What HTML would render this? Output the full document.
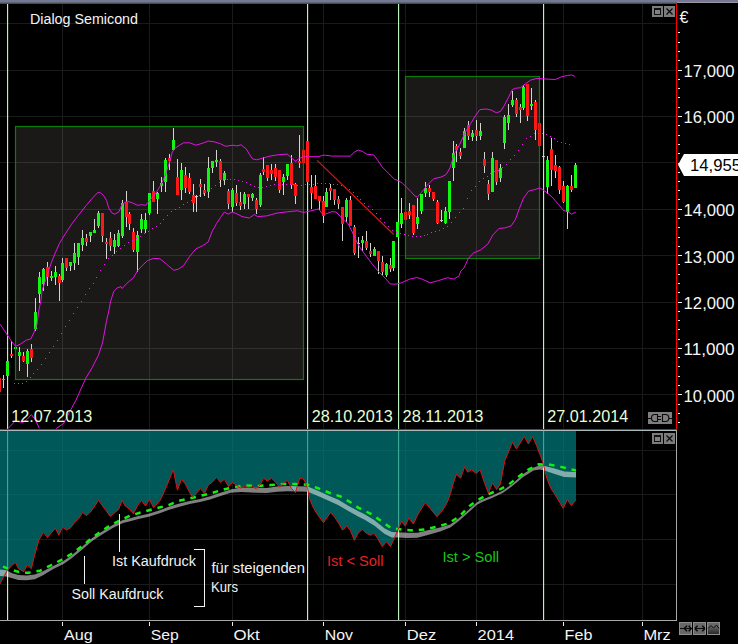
<!DOCTYPE html><html><head><meta charset="utf-8"><title>Dialog Semicond</title>
<style>html,body{margin:0;padding:0;background:#000;overflow:hidden}svg{display:block}text{font-family:"Liberation Sans",sans-serif}</style></head><body>
<svg width="738" height="644" viewBox="0 0 738 644">
<rect width="738" height="644" fill="#000"/>
<g shape-rendering="crispEdges">
<rect x="0" y="0" width="738" height="2" fill="#77779a"/>
<rect x="0" y="2" width="677" height="1" fill="#5a6a6c"/>
<rect x="677" y="2" width="61" height="1" fill="#9a9a9a"/>
<rect x="62" y="4" width="1" height="425" fill="#1a1a1a"/>
<rect x="62" y="431" width="1" height="189" fill="#1a1a1a"/>
<rect x="149" y="4" width="1" height="425" fill="#1a1a1a"/>
<rect x="149" y="431" width="1" height="189" fill="#1a1a1a"/>
<rect x="232" y="4" width="1" height="425" fill="#1a1a1a"/>
<rect x="232" y="431" width="1" height="189" fill="#1a1a1a"/>
<rect x="323" y="4" width="1" height="425" fill="#1a1a1a"/>
<rect x="323" y="431" width="1" height="189" fill="#1a1a1a"/>
<rect x="405" y="4" width="1" height="425" fill="#1a1a1a"/>
<rect x="405" y="431" width="1" height="189" fill="#1a1a1a"/>
<rect x="476" y="4" width="1" height="425" fill="#1a1a1a"/>
<rect x="476" y="431" width="1" height="189" fill="#1a1a1a"/>
<rect x="563" y="4" width="1" height="425" fill="#1a1a1a"/>
<rect x="563" y="431" width="1" height="189" fill="#1a1a1a"/>
<rect x="642" y="4" width="1" height="425" fill="#1a1a1a"/>
<rect x="642" y="431" width="1" height="189" fill="#1a1a1a"/>
<rect x="0" y="23" width="676" height="1" fill="#1a1a1a"/>
<rect x="0" y="70" width="676" height="1" fill="#1a1a1a"/>
<rect x="0" y="116" width="676" height="1" fill="#1a1a1a"/>
<rect x="0" y="162" width="676" height="1" fill="#1a1a1a"/>
<rect x="0" y="209" width="676" height="1" fill="#1a1a1a"/>
<rect x="0" y="255" width="676" height="1" fill="#1a1a1a"/>
<rect x="0" y="302" width="676" height="1" fill="#1a1a1a"/>
<rect x="0" y="348" width="676" height="1" fill="#1a1a1a"/>
<rect x="0" y="394" width="676" height="1" fill="#1a1a1a"/>
<rect x="0" y="450" width="676" height="1" fill="#1a1a1a"/>
<rect x="0" y="494" width="676" height="1" fill="#1a1a1a"/>
<rect x="0" y="539" width="676" height="1" fill="#1a1a1a"/>
<rect x="0" y="584" width="676" height="1" fill="#1a1a1a"/>
</g>
<rect x="15.5" y="126.5" width="288" height="253" fill="rgba(255,236,214,0.105)"/>
<rect x="405.5" y="76.5" width="134" height="182" fill="rgba(255,236,214,0.105)"/>
<rect x="7" y="4" width="1.15" height="425" fill="#bdf2bd"/>
<rect x="307" y="4" width="1.15" height="425" fill="#bdf2bd"/>
<rect x="398" y="4" width="1.15" height="425" fill="#bdf2bd"/>
<rect x="543" y="4" width="1.15" height="425" fill="#bdf2bd"/>
<g shape-rendering="crispEdges">
<rect x="-2" y="378" width="3" height="14" fill="#ff1818"/>
<rect x="3" y="375" width="1" height="13" fill="#d6d4ce"/>
<rect x="2" y="379" width="3" height="1" fill="#12f612"/>
<rect x="6" y="361" width="3" height="15" fill="#12f612"/>
<rect x="11" y="341" width="1" height="17" fill="#d6d4ce"/>
<rect x="10" y="354" width="3" height="2" fill="#ff1818"/>
<rect x="15" y="343" width="1" height="7" fill="#d6d4ce"/>
<rect x="14" y="347" width="3" height="2" fill="#12f612"/>
<rect x="19" y="347" width="1" height="24" fill="#d6d4ce"/>
<rect x="18" y="352" width="3" height="4" fill="#12f612"/>
<rect x="23" y="352" width="1" height="10" fill="#d6d4ce"/>
<rect x="22" y="356" width="3" height="5" fill="#ff1818"/>
<rect x="27" y="349" width="1" height="28" fill="#d6d4ce"/>
<rect x="26" y="351" width="3" height="13" fill="#12f612"/>
<rect x="31" y="344" width="1" height="18" fill="#d6d4ce"/>
<rect x="30" y="349" width="3" height="9" fill="#ff1818"/>
<rect x="35" y="298" width="1" height="33" fill="#d6d4ce"/>
<rect x="34" y="312" width="3" height="17" fill="#12f612"/>
<rect x="39" y="272" width="1" height="31" fill="#d6d4ce"/>
<rect x="38" y="277" width="3" height="17" fill="#12f612"/>
<rect x="43" y="268" width="1" height="23" fill="#d6d4ce"/>
<rect x="42" y="269" width="3" height="15" fill="#12f612"/>
<rect x="47" y="262" width="1" height="24" fill="#d6d4ce"/>
<rect x="46" y="267" width="3" height="10" fill="#ff1818"/>
<rect x="51" y="271" width="1" height="10" fill="#d6d4ce"/>
<rect x="50" y="276" width="3" height="2" fill="#12f612"/>
<rect x="55" y="266" width="1" height="19" fill="#d6d4ce"/>
<rect x="54" y="272" width="3" height="5" fill="#12f612"/>
<rect x="59" y="274" width="1" height="27" fill="#d6d4ce"/>
<rect x="58" y="276" width="3" height="7" fill="#ff1818"/>
<rect x="62" y="258" width="1" height="24" fill="#d6d4ce"/>
<rect x="61" y="263" width="3" height="17" fill="#12f612"/>
<rect x="66" y="258" width="1" height="13" fill="#d6d4ce"/>
<rect x="65" y="258" width="3" height="10" fill="#ff1818"/>
<rect x="70" y="262" width="1" height="9" fill="#d6d4ce"/>
<rect x="69" y="262" width="3" height="4" fill="#12f612"/>
<rect x="74" y="243" width="1" height="27" fill="#d6d4ce"/>
<rect x="73" y="253" width="3" height="10" fill="#12f612"/>
<rect x="78" y="243" width="1" height="22" fill="#d6d4ce"/>
<rect x="77" y="243" width="3" height="14" fill="#12f612"/>
<rect x="82" y="230" width="1" height="21" fill="#d6d4ce"/>
<rect x="81" y="238" width="3" height="7" fill="#12f612"/>
<rect x="86" y="234" width="1" height="12" fill="#d6d4ce"/>
<rect x="85" y="238" width="3" height="4" fill="#ff1818"/>
<rect x="90" y="232" width="1" height="10" fill="#d6d4ce"/>
<rect x="89" y="232" width="3" height="4" fill="#12f612"/>
<rect x="94" y="219" width="1" height="14" fill="#d6d4ce"/>
<rect x="93" y="230" width="3" height="3" fill="#12f612"/>
<rect x="98" y="211" width="1" height="17" fill="#d6d4ce"/>
<rect x="97" y="213" width="3" height="13" fill="#12f612"/>
<rect x="102" y="213" width="1" height="29" fill="#d6d4ce"/>
<rect x="101" y="213" width="3" height="23" fill="#ff1818"/>
<rect x="106" y="238" width="1" height="21" fill="#d6d4ce"/>
<rect x="105" y="242" width="3" height="2" fill="#ff1818"/>
<rect x="110" y="232" width="1" height="19" fill="#d6d4ce"/>
<rect x="109" y="238" width="3" height="8" fill="#ff1818"/>
<rect x="114" y="234" width="1" height="20" fill="#d6d4ce"/>
<rect x="113" y="240" width="3" height="7" fill="#12f612"/>
<rect x="118" y="230" width="1" height="17" fill="#d6d4ce"/>
<rect x="117" y="233" width="3" height="13" fill="#12f612"/>
<rect x="122" y="200" width="1" height="38" fill="#d6d4ce"/>
<rect x="121" y="203" width="3" height="33" fill="#12f612"/>
<rect x="126" y="191" width="1" height="36" fill="#d6d4ce"/>
<rect x="125" y="202" width="3" height="15" fill="#ff1818"/>
<rect x="129" y="212" width="1" height="18" fill="#d6d4ce"/>
<rect x="128" y="214" width="3" height="10" fill="#ff1818"/>
<rect x="133" y="228" width="1" height="24" fill="#d6d4ce"/>
<rect x="132" y="232" width="3" height="18" fill="#ff1818"/>
<rect x="137" y="231" width="1" height="41" fill="#d6d4ce"/>
<rect x="136" y="235" width="3" height="17" fill="#12f612"/>
<rect x="141" y="214" width="1" height="19" fill="#d6d4ce"/>
<rect x="140" y="219" width="3" height="10" fill="#12f612"/>
<rect x="145" y="213" width="1" height="20" fill="#d6d4ce"/>
<rect x="144" y="220" width="3" height="9" fill="#12f612"/>
<rect x="149" y="193" width="1" height="22" fill="#d6d4ce"/>
<rect x="148" y="193" width="3" height="20" fill="#12f612"/>
<rect x="153" y="181" width="1" height="21" fill="#d6d4ce"/>
<rect x="152" y="191" width="3" height="11" fill="#ff1818"/>
<rect x="157" y="192" width="1" height="22" fill="#d6d4ce"/>
<rect x="156" y="193" width="3" height="6" fill="#12f612"/>
<rect x="161" y="177" width="1" height="15" fill="#d6d4ce"/>
<rect x="160" y="183" width="3" height="3" fill="#12f612"/>
<rect x="165" y="158" width="1" height="34" fill="#d6d4ce"/>
<rect x="164" y="160" width="3" height="22" fill="#12f612"/>
<rect x="169" y="154" width="1" height="16" fill="#d6d4ce"/>
<rect x="168" y="158" width="3" height="3" fill="#ff1818"/>
<rect x="173" y="128" width="1" height="22" fill="#d6d4ce"/>
<rect x="172" y="140" width="3" height="10" fill="#12f612"/>
<rect x="177" y="159" width="1" height="36" fill="#d6d4ce"/>
<rect x="176" y="177" width="3" height="18" fill="#ff1818"/>
<rect x="181" y="163" width="1" height="37" fill="#d6d4ce"/>
<rect x="180" y="170" width="3" height="20" fill="#12f612"/>
<rect x="185" y="167" width="1" height="26" fill="#d6d4ce"/>
<rect x="184" y="175" width="3" height="13" fill="#ff1818"/>
<rect x="189" y="173" width="1" height="21" fill="#d6d4ce"/>
<rect x="188" y="178" width="3" height="14" fill="#ff1818"/>
<rect x="193" y="184" width="1" height="28" fill="#d6d4ce"/>
<rect x="192" y="195" width="3" height="8" fill="#ff1818"/>
<rect x="196" y="195" width="1" height="17" fill="#d6d4ce"/>
<rect x="195" y="196" width="3" height="1" fill="#c8c8c8"/>
<rect x="200" y="179" width="1" height="18" fill="#d6d4ce"/>
<rect x="199" y="184" width="3" height="3" fill="#ff1818"/>
<rect x="204" y="184" width="1" height="12" fill="#d6d4ce"/>
<rect x="203" y="190" width="3" height="3" fill="#ff1818"/>
<rect x="208" y="157" width="1" height="41" fill="#d6d4ce"/>
<rect x="207" y="168" width="3" height="24" fill="#12f612"/>
<rect x="212" y="161" width="1" height="12" fill="#d6d4ce"/>
<rect x="211" y="161" width="3" height="7" fill="#12f612"/>
<rect x="216" y="150" width="1" height="17" fill="#d6d4ce"/>
<rect x="215" y="160" width="3" height="2" fill="#12f612"/>
<rect x="220" y="159" width="1" height="28" fill="#d6d4ce"/>
<rect x="219" y="161" width="3" height="19" fill="#ff1818"/>
<rect x="224" y="171" width="1" height="14" fill="#d6d4ce"/>
<rect x="223" y="173" width="3" height="7" fill="#12f612"/>
<rect x="228" y="189" width="1" height="20" fill="#d6d4ce"/>
<rect x="227" y="191" width="3" height="13" fill="#ff1818"/>
<rect x="232" y="188" width="1" height="24" fill="#d6d4ce"/>
<rect x="231" y="190" width="3" height="17" fill="#12f612"/>
<rect x="236" y="185" width="1" height="21" fill="#d6d4ce"/>
<rect x="235" y="193" width="3" height="10" fill="#ff1818"/>
<rect x="240" y="192" width="1" height="18" fill="#d6d4ce"/>
<rect x="239" y="202" width="3" height="4" fill="#ff1818"/>
<rect x="244" y="192" width="1" height="17" fill="#d6d4ce"/>
<rect x="243" y="194" width="3" height="10" fill="#12f612"/>
<rect x="248" y="194" width="1" height="15" fill="#d6d4ce"/>
<rect x="247" y="194" width="3" height="3" fill="#ff1818"/>
<rect x="252" y="193" width="1" height="8" fill="#d6d4ce"/>
<rect x="251" y="194" width="3" height="4" fill="#12f612"/>
<rect x="256" y="198" width="1" height="16" fill="#d6d4ce"/>
<rect x="255" y="200" width="3" height="9" fill="#ff1818"/>
<rect x="260" y="173" width="1" height="34" fill="#d6d4ce"/>
<rect x="259" y="175" width="3" height="30" fill="#12f612"/>
<rect x="263" y="157" width="1" height="18" fill="#d6d4ce"/>
<rect x="262" y="169" width="3" height="3" fill="#ff1818"/>
<rect x="267" y="165" width="1" height="16" fill="#d6d4ce"/>
<rect x="266" y="165" width="3" height="13" fill="#ff1818"/>
<rect x="271" y="164" width="1" height="16" fill="#d6d4ce"/>
<rect x="270" y="170" width="3" height="4" fill="#ff1818"/>
<rect x="275" y="164" width="1" height="17" fill="#d6d4ce"/>
<rect x="274" y="168" width="3" height="9" fill="#ff1818"/>
<rect x="279" y="170" width="1" height="23" fill="#d6d4ce"/>
<rect x="278" y="170" width="3" height="20" fill="#ff1818"/>
<rect x="283" y="174" width="1" height="21" fill="#d6d4ce"/>
<rect x="282" y="177" width="3" height="5" fill="#12f612"/>
<rect x="287" y="164" width="1" height="16" fill="#d6d4ce"/>
<rect x="286" y="164" width="3" height="12" fill="#12f612"/>
<rect x="291" y="155" width="1" height="34" fill="#d6d4ce"/>
<rect x="290" y="163" width="3" height="22" fill="#ff1818"/>
<rect x="295" y="183" width="1" height="21" fill="#d6d4ce"/>
<rect x="294" y="184" width="3" height="12" fill="#ff1818"/>
<rect x="299" y="135" width="1" height="33" fill="#d6d4ce"/>
<rect x="298" y="161" width="3" height="2" fill="#ff1818"/>
<rect x="302" y="150" width="3" height="13" fill="#ff1818"/>
<rect x="306" y="141" width="3" height="41" fill="#ff1818"/>
<rect x="311" y="175" width="1" height="34" fill="#d6d4ce"/>
<rect x="310" y="187" width="3" height="6" fill="#ff1818"/>
<rect x="315" y="175" width="1" height="24" fill="#d6d4ce"/>
<rect x="314" y="186" width="3" height="13" fill="#ff1818"/>
<rect x="319" y="196" width="1" height="14" fill="#d6d4ce"/>
<rect x="318" y="196" width="3" height="5" fill="#ff1818"/>
<rect x="323" y="196" width="1" height="27" fill="#d6d4ce"/>
<rect x="322" y="201" width="3" height="15" fill="#ff1818"/>
<rect x="326" y="188" width="1" height="19" fill="#d6d4ce"/>
<rect x="325" y="192" width="3" height="15" fill="#12f612"/>
<rect x="330" y="184" width="1" height="16" fill="#d6d4ce"/>
<rect x="329" y="188" width="3" height="3" fill="#ff1818"/>
<rect x="334" y="189" width="1" height="16" fill="#d6d4ce"/>
<rect x="333" y="189" width="3" height="11" fill="#ff1818"/>
<rect x="338" y="196" width="1" height="13" fill="#d6d4ce"/>
<rect x="337" y="199" width="3" height="5" fill="#ff1818"/>
<rect x="342" y="207" width="1" height="34" fill="#d6d4ce"/>
<rect x="341" y="207" width="3" height="17" fill="#ff1818"/>
<rect x="346" y="198" width="1" height="24" fill="#d6d4ce"/>
<rect x="345" y="200" width="3" height="17" fill="#12f612"/>
<rect x="350" y="196" width="1" height="30" fill="#d6d4ce"/>
<rect x="349" y="200" width="3" height="26" fill="#ff1818"/>
<rect x="354" y="225" width="1" height="30" fill="#d6d4ce"/>
<rect x="353" y="227" width="3" height="26" fill="#ff1818"/>
<rect x="358" y="237" width="1" height="21" fill="#d6d4ce"/>
<rect x="357" y="243" width="3" height="1" fill="#c8c8c8"/>
<rect x="362" y="236" width="1" height="15" fill="#d6d4ce"/>
<rect x="361" y="240" width="3" height="3" fill="#12f612"/>
<rect x="366" y="231" width="1" height="19" fill="#d6d4ce"/>
<rect x="365" y="241" width="3" height="7" fill="#ff1818"/>
<rect x="370" y="243" width="1" height="14" fill="#d6d4ce"/>
<rect x="369" y="251" width="3" height="3" fill="#ff1818"/>
<rect x="374" y="247" width="1" height="9" fill="#d6d4ce"/>
<rect x="373" y="249" width="3" height="7" fill="#12f612"/>
<rect x="378" y="251" width="1" height="23" fill="#d6d4ce"/>
<rect x="377" y="251" width="3" height="10" fill="#ff1818"/>
<rect x="382" y="256" width="1" height="19" fill="#d6d4ce"/>
<rect x="381" y="262" width="3" height="10" fill="#ff1818"/>
<rect x="386" y="263" width="1" height="14" fill="#d6d4ce"/>
<rect x="385" y="264" width="3" height="11" fill="#12f612"/>
<rect x="390" y="258" width="1" height="14" fill="#d6d4ce"/>
<rect x="389" y="265" width="3" height="4" fill="#ff1818"/>
<rect x="393" y="241" width="1" height="30" fill="#d6d4ce"/>
<rect x="392" y="241" width="3" height="27" fill="#12f612"/>
<rect x="396" y="222" width="3" height="15" fill="#12f612"/>
<rect x="401" y="198" width="1" height="30" fill="#d6d4ce"/>
<rect x="400" y="213" width="3" height="11" fill="#12f612"/>
<rect x="404" y="212" width="3" height="8" fill="#ff1818"/>
<rect x="409" y="203" width="1" height="16" fill="#d6d4ce"/>
<rect x="408" y="211" width="3" height="4" fill="#ff1818"/>
<rect x="413" y="205" width="1" height="30" fill="#d6d4ce"/>
<rect x="412" y="205" width="3" height="28" fill="#ff1818"/>
<rect x="417" y="198" width="1" height="31" fill="#d6d4ce"/>
<rect x="416" y="217" width="3" height="7" fill="#12f612"/>
<rect x="421" y="194" width="1" height="20" fill="#d6d4ce"/>
<rect x="420" y="194" width="3" height="17" fill="#12f612"/>
<rect x="425" y="182" width="1" height="15" fill="#d6d4ce"/>
<rect x="424" y="188" width="3" height="5" fill="#12f612"/>
<rect x="429" y="185" width="1" height="12" fill="#d6d4ce"/>
<rect x="428" y="188" width="3" height="4" fill="#ff1818"/>
<rect x="433" y="192" width="1" height="9" fill="#d6d4ce"/>
<rect x="432" y="192" width="3" height="7" fill="#ff1818"/>
<rect x="437" y="200" width="1" height="24" fill="#d6d4ce"/>
<rect x="436" y="202" width="3" height="21" fill="#ff1818"/>
<rect x="441" y="210" width="1" height="12" fill="#d6d4ce"/>
<rect x="440" y="220" width="3" height="1" fill="#c8c8c8"/>
<rect x="445" y="207" width="1" height="17" fill="#d6d4ce"/>
<rect x="444" y="211" width="3" height="12" fill="#12f612"/>
<rect x="449" y="181" width="1" height="38" fill="#d6d4ce"/>
<rect x="448" y="181" width="3" height="31" fill="#12f612"/>
<rect x="453" y="141" width="1" height="40" fill="#d6d4ce"/>
<rect x="452" y="153" width="3" height="15" fill="#12f612"/>
<rect x="456" y="144" width="1" height="18" fill="#d6d4ce"/>
<rect x="455" y="146" width="3" height="4" fill="#ff1818"/>
<rect x="460" y="148" width="1" height="11" fill="#d6d4ce"/>
<rect x="459" y="152" width="3" height="4" fill="#ff1818"/>
<rect x="464" y="128" width="1" height="20" fill="#d6d4ce"/>
<rect x="463" y="131" width="3" height="17" fill="#12f612"/>
<rect x="468" y="121" width="1" height="19" fill="#d6d4ce"/>
<rect x="467" y="125" width="3" height="11" fill="#ff1818"/>
<rect x="472" y="130" width="1" height="11" fill="#d6d4ce"/>
<rect x="471" y="133" width="3" height="4" fill="#12f612"/>
<rect x="476" y="120" width="1" height="21" fill="#d6d4ce"/>
<rect x="475" y="130" width="3" height="6" fill="#ff1818"/>
<rect x="480" y="123" width="1" height="17" fill="#d6d4ce"/>
<rect x="479" y="131" width="3" height="5" fill="#12f612"/>
<rect x="484" y="152" width="1" height="21" fill="#d6d4ce"/>
<rect x="483" y="159" width="3" height="7" fill="#ff1818"/>
<rect x="488" y="180" width="1" height="20" fill="#d6d4ce"/>
<rect x="487" y="184" width="3" height="10" fill="#ff1818"/>
<rect x="492" y="152" width="1" height="40" fill="#d6d4ce"/>
<rect x="491" y="158" width="3" height="34" fill="#12f612"/>
<rect x="496" y="160" width="1" height="25" fill="#d6d4ce"/>
<rect x="495" y="160" width="3" height="22" fill="#ff1818"/>
<rect x="500" y="164" width="1" height="18" fill="#d6d4ce"/>
<rect x="499" y="168" width="3" height="10" fill="#12f612"/>
<rect x="504" y="115" width="1" height="34" fill="#d6d4ce"/>
<rect x="503" y="117" width="3" height="26" fill="#12f612"/>
<rect x="508" y="104" width="1" height="26" fill="#d6d4ce"/>
<rect x="507" y="115" width="3" height="8" fill="#12f612"/>
<rect x="512" y="91" width="1" height="16" fill="#d6d4ce"/>
<rect x="511" y="100" width="3" height="5" fill="#12f612"/>
<rect x="516" y="98" width="1" height="19" fill="#d6d4ce"/>
<rect x="515" y="100" width="3" height="14" fill="#ff1818"/>
<rect x="520" y="104" width="1" height="19" fill="#d6d4ce"/>
<rect x="519" y="107" width="3" height="3" fill="#ff1818"/>
<rect x="523" y="85" width="1" height="25" fill="#d6d4ce"/>
<rect x="522" y="87" width="3" height="21" fill="#12f612"/>
<rect x="527" y="84" width="1" height="37" fill="#d6d4ce"/>
<rect x="526" y="84" width="3" height="32" fill="#ff1818"/>
<rect x="531" y="88" width="1" height="22" fill="#d6d4ce"/>
<rect x="530" y="104" width="3" height="2" fill="#12f612"/>
<rect x="535" y="100" width="1" height="40" fill="#d6d4ce"/>
<rect x="534" y="102" width="3" height="28" fill="#ff1818"/>
<rect x="538" y="123" width="3" height="23" fill="#ff1818"/>
<rect x="543" y="137" width="1" height="34" fill="#d6d4ce"/>
<rect x="542" y="156" width="3" height="1" fill="#c8c8c8"/>
<rect x="547" y="156" width="1" height="38" fill="#d6d4ce"/>
<rect x="546" y="160" width="3" height="27" fill="#12f612"/>
<rect x="551" y="138" width="1" height="48" fill="#d6d4ce"/>
<rect x="550" y="149" width="3" height="21" fill="#ff1818"/>
<rect x="555" y="155" width="1" height="23" fill="#d6d4ce"/>
<rect x="554" y="165" width="3" height="6" fill="#ff1818"/>
<rect x="559" y="166" width="1" height="28" fill="#d6d4ce"/>
<rect x="558" y="167" width="3" height="23" fill="#ff1818"/>
<rect x="563" y="181" width="1" height="22" fill="#d6d4ce"/>
<rect x="562" y="186" width="3" height="16" fill="#ff1818"/>
<rect x="567" y="185" width="1" height="44" fill="#d6d4ce"/>
<rect x="566" y="186" width="3" height="26" fill="#12f612"/>
<rect x="571" y="175" width="1" height="17" fill="#d6d4ce"/>
<rect x="570" y="186" width="3" height="4" fill="#ff1818"/>
<rect x="575" y="163" width="1" height="25" fill="#d6d4ce"/>
<rect x="574" y="165" width="3" height="23" fill="#12f612"/>
</g>
<rect x="15.5" y="126.5" width="288" height="253" fill="none" stroke="#0a7c0a" stroke-width="1.2"/>
<rect x="405.5" y="76.5" width="134" height="182" fill="none" stroke="#0a7c0a" stroke-width="1.2"/>
<polyline points="0,324.2 4,330 8,336 12,342 15.4,346.1 16.4,346 20.5,344 26.6,340 30.7,339 33.8,332.8 36.9,324.6 38.9,310 41,300 42,290.7 47.5,274.3 51.2,263 55.3,252.8 59.4,243.5 65.6,233.3 71.7,224.1 77.9,215.9 86.1,205.6 92.2,198.4 97.3,192.9 99.8,192.3 103.5,195.4 106.6,200.5 108.6,207.7 111.7,212.8 114.8,214.2 118.9,211.8 122.1,204.3 127.2,201.2 132.3,202.8 137.5,205.3 141.6,204.7 145.7,205.3 150.8,199.1 155.9,193 161,184.8 165.1,175.6 169.2,163.3 172.3,152 175.4,147.9 179.5,145.2 183.6,142.8 189.7,142.8 195.9,145.2 202,143.4 208.2,141.1 214.3,141.8 220.5,143.8 225.6,146.3 232.8,145.2 236.9,145.9 241.1,144.8 246.2,148.9 249.3,154.1 252.4,158.8 256.5,159.8 262.6,158.2 269.8,156.1 279,154.7 287.2,154.1 292.4,158.6 295.4,161.2 299.5,158.2 303.6,156.7 318,156.7 321.6,155.6 324.1,155.1 332.3,156.1 342.6,156.1 350.3,156.2 354.4,151.9 358.5,150.1 362.6,151.5 366.7,154.2 373.9,155 378,160.7 382.1,166.9 388.2,173 394.4,179.2 398.5,180.8 402.6,183.3 406.7,187.4 410.8,191.5 414.9,196 417.4,197.1 421.5,192.4 426.6,185.9 433.8,178.7 441,177.1 446.1,174.6 450.2,167.4 454.3,154.1 459.4,144.9 465.6,131.6 470.7,123.4 475.8,115.2 479.9,109.6 486.1,109 491.2,110.1 496.3,112.7 500.4,111.5 504.3,105.5 508.2,97.9 512.3,89.7 515.4,88.3 520.5,87.7 525.6,83.6 530.7,80.1 536.9,78.4 547.1,79.1 555.3,79.5 561.5,76.8 567.6,75.4 571.7,75 574.8,76.4" fill="none" stroke="#f010f0" stroke-width="0.95" stroke-linejoin="round"/>
<polyline points="8.1,428.5 14.9,421.3 23,422.3 27.1,419.3 31.4,414.6 35.9,420.7 39.3,428.5" fill="none" stroke="#f010f0" stroke-width="0.95" stroke-linejoin="round"/>
<polyline points="56.2,428.5 63.7,423.4 67.8,415.2 71.8,407.8 75.9,400.3 81.3,388.1 86,377.9 92.2,367.6 98.4,355.3 102.5,343 106.6,320.5 108.6,312 110.7,300.9 113.7,291.7 116.8,288.2 120.9,286.6 122.1,288.5 128.2,282 133.4,277.9 137.5,270.7 142.6,265.2 147.7,260.5 153.9,258.4 160,258.8 166.2,263.9 173.7,270.3 178.5,269.1 183.6,265.6 189.7,256.4 195.9,248.8 202,246.1 208.2,242 212.3,230.9 214.3,227.7 216.4,223.7 220.5,217.5 224.3,212.1 228.2,214.1 232.3,212 236.9,213.9 242,216.5 244.2,217 249.3,218 254.4,214.5 257.5,216.6 266.7,215.9 277,213.1 287.2,211.8 297.5,210.8 303.4,212.4 310.3,211 318.5,208.9 322.4,213.8 325.7,214 331.9,211.6 336,212 340.1,216.1 344.1,219.7 348.2,223.8 352.3,232 356.4,241.2 360.5,248.4 366.6,256.6 372.8,264.8 378.9,272 385.1,278.1 390.2,283.9 395.3,284.3 401.5,282.8 409.7,279.1 416.8,277.5 422,279.1 430.2,282.8 438.4,280.6 447.6,277.7 453.7,279.1 458.9,276.1 460.9,270.9 464.1,267.8 468.2,258.6 473.3,253.1 480.5,250 487.7,244.3 492.8,235.1 498.9,228.5 505.1,227.9 511.2,225.8 515.3,219.7 519.4,208.4 523.5,198.2 528.7,191 534.8,189.6 539.9,187.9 546.1,192 552.2,197.1 558.4,204.3 563.5,210.5 567.6,211.5 571.7,214.1 575.8,212.1" fill="none" stroke="#f010f0" stroke-width="0.95" stroke-linejoin="round"/>
<rect x="14" y="383" width="1" height="1" fill="#ec1aec" shape-rendering="crispEdges"/>
<rect x="18" y="383" width="1" height="1" fill="#ec1aec" shape-rendering="crispEdges"/>
<rect x="22" y="383" width="1" height="1" fill="#ec1aec" shape-rendering="crispEdges"/>
<rect x="26" y="381" width="1" height="1" fill="#ec1aec" shape-rendering="crispEdges"/>
<rect x="30" y="377" width="1" height="1" fill="#ec1aec" shape-rendering="crispEdges"/>
<rect x="33" y="373" width="1" height="1" fill="#ec1aec" shape-rendering="crispEdges"/>
<rect x="37" y="369" width="1" height="1" fill="#ec1aec" shape-rendering="crispEdges"/>
<rect x="41" y="364" width="1" height="1" fill="#ec1aec" shape-rendering="crispEdges"/>
<rect x="45" y="358" width="1" height="1" fill="#ec1aec" shape-rendering="crispEdges"/>
<rect x="49" y="352" width="1" height="1" fill="#ec1aec" shape-rendering="crispEdges"/>
<rect x="53" y="346" width="1" height="1" fill="#ec1aec" shape-rendering="crispEdges"/>
<rect x="57" y="340" width="1" height="1" fill="#ec1aec" shape-rendering="crispEdges"/>
<rect x="61" y="333" width="1" height="1" fill="#ec1aec" shape-rendering="crispEdges"/>
<rect x="65" y="326" width="1" height="1" fill="#ec1aec" shape-rendering="crispEdges"/>
<rect x="69" y="320" width="1" height="1" fill="#ec1aec" shape-rendering="crispEdges"/>
<rect x="73" y="313" width="1" height="1" fill="#ec1aec" shape-rendering="crispEdges"/>
<rect x="77" y="307" width="1" height="1" fill="#ec1aec" shape-rendering="crispEdges"/>
<rect x="81" y="301" width="1" height="1" fill="#ec1aec" shape-rendering="crispEdges"/>
<rect x="85" y="294" width="1" height="1" fill="#ec1aec" shape-rendering="crispEdges"/>
<rect x="89" y="288" width="1" height="1" fill="#ec1aec" shape-rendering="crispEdges"/>
<rect x="93" y="283" width="1" height="1" fill="#ec1aec" shape-rendering="crispEdges"/>
<rect x="96" y="277" width="1" height="1" fill="#ec1aec" shape-rendering="crispEdges"/>
<rect x="100" y="270" width="1" height="1" fill="#ec1aec" shape-rendering="crispEdges"/>
<rect x="104" y="264" width="1" height="1" fill="#ec1aec" shape-rendering="crispEdges"/>
<rect x="108" y="258" width="1" height="1" fill="#ec1aec" shape-rendering="crispEdges"/>
<rect x="112" y="255" width="1" height="1" fill="#ec1aec" shape-rendering="crispEdges"/>
<rect x="116" y="251" width="1" height="1" fill="#ec1aec" shape-rendering="crispEdges"/>
<rect x="120" y="248" width="1" height="1" fill="#ec1aec" shape-rendering="crispEdges"/>
<rect x="124" y="245" width="1" height="1" fill="#ec1aec" shape-rendering="crispEdges"/>
<rect x="128" y="242" width="1" height="1" fill="#ec1aec" shape-rendering="crispEdges"/>
<rect x="132" y="240" width="1" height="1" fill="#ec1aec" shape-rendering="crispEdges"/>
<rect x="136" y="238" width="1" height="1" fill="#ec1aec" shape-rendering="crispEdges"/>
<rect x="140" y="236" width="1" height="1" fill="#ec1aec" shape-rendering="crispEdges"/>
<rect x="144" y="233" width="1" height="1" fill="#ec1aec" shape-rendering="crispEdges"/>
<rect x="148" y="231" width="1" height="1" fill="#ec1aec" shape-rendering="crispEdges"/>
<rect x="152" y="228" width="1" height="1" fill="#ec1aec" shape-rendering="crispEdges"/>
<rect x="156" y="226" width="1" height="1" fill="#ec1aec" shape-rendering="crispEdges"/>
<rect x="160" y="223" width="1" height="1" fill="#ec1aec" shape-rendering="crispEdges"/>
<rect x="163" y="219" width="1" height="1" fill="#ec1aec" shape-rendering="crispEdges"/>
<rect x="167" y="215" width="1" height="1" fill="#ec1aec" shape-rendering="crispEdges"/>
<rect x="171" y="211" width="1" height="1" fill="#ec1aec" shape-rendering="crispEdges"/>
<rect x="175" y="209" width="1" height="1" fill="#ec1aec" shape-rendering="crispEdges"/>
<rect x="179" y="207" width="1" height="1" fill="#ec1aec" shape-rendering="crispEdges"/>
<rect x="183" y="204" width="1" height="1" fill="#ec1aec" shape-rendering="crispEdges"/>
<rect x="187" y="202" width="1" height="1" fill="#ec1aec" shape-rendering="crispEdges"/>
<rect x="191" y="200" width="1" height="1" fill="#ec1aec" shape-rendering="crispEdges"/>
<rect x="195" y="197" width="1" height="1" fill="#ec1aec" shape-rendering="crispEdges"/>
<rect x="199" y="195" width="1" height="1" fill="#ec1aec" shape-rendering="crispEdges"/>
<rect x="203" y="193" width="1" height="1" fill="#ec1aec" shape-rendering="crispEdges"/>
<rect x="207" y="191" width="1" height="1" fill="#ec1aec" shape-rendering="crispEdges"/>
<rect x="211" y="188" width="1" height="1" fill="#ec1aec" shape-rendering="crispEdges"/>
<rect x="215" y="185" width="1" height="1" fill="#ec1aec" shape-rendering="crispEdges"/>
<rect x="219" y="182" width="1" height="1" fill="#ec1aec" shape-rendering="crispEdges"/>
<rect x="223" y="180" width="1" height="1" fill="#ec1aec" shape-rendering="crispEdges"/>
<rect x="227" y="179" width="1" height="1" fill="#ec1aec" shape-rendering="crispEdges"/>
<rect x="230" y="179" width="1" height="1" fill="#ec1aec" shape-rendering="crispEdges"/>
<rect x="234" y="179" width="1" height="1" fill="#ec1aec" shape-rendering="crispEdges"/>
<rect x="238" y="180" width="1" height="1" fill="#ec1aec" shape-rendering="crispEdges"/>
<rect x="242" y="181" width="1" height="1" fill="#ec1aec" shape-rendering="crispEdges"/>
<rect x="246" y="182" width="1" height="1" fill="#ec1aec" shape-rendering="crispEdges"/>
<rect x="250" y="184" width="1" height="1" fill="#ec1aec" shape-rendering="crispEdges"/>
<rect x="254" y="186" width="1" height="1" fill="#ec1aec" shape-rendering="crispEdges"/>
<rect x="258" y="187" width="1" height="1" fill="#ec1aec" shape-rendering="crispEdges"/>
<rect x="262" y="187" width="1" height="1" fill="#ec1aec" shape-rendering="crispEdges"/>
<rect x="266" y="186" width="1" height="1" fill="#ec1aec" shape-rendering="crispEdges"/>
<rect x="270" y="185" width="1" height="1" fill="#ec1aec" shape-rendering="crispEdges"/>
<rect x="274" y="184" width="1" height="1" fill="#ec1aec" shape-rendering="crispEdges"/>
<rect x="278" y="184" width="1" height="1" fill="#ec1aec" shape-rendering="crispEdges"/>
<rect x="282" y="184" width="1" height="1" fill="#ec1aec" shape-rendering="crispEdges"/>
<rect x="286" y="184" width="1" height="1" fill="#ec1aec" shape-rendering="crispEdges"/>
<rect x="290" y="184" width="1" height="1" fill="#ec1aec" shape-rendering="crispEdges"/>
<rect x="293" y="184" width="1" height="1" fill="#ec1aec" shape-rendering="crispEdges"/>
<rect x="297" y="185" width="1" height="1" fill="#ec1aec" shape-rendering="crispEdges"/>
<rect x="301" y="185" width="1" height="1" fill="#ec1aec" shape-rendering="crispEdges"/>
<rect x="305" y="184" width="1" height="1" fill="#ec1aec" shape-rendering="crispEdges"/>
<rect x="309" y="184" width="1" height="1" fill="#ec1aec" shape-rendering="crispEdges"/>
<rect x="313" y="184" width="1" height="1" fill="#ec1aec" shape-rendering="crispEdges"/>
<rect x="317" y="183" width="1" height="1" fill="#ec1aec" shape-rendering="crispEdges"/>
<rect x="321" y="183" width="1" height="1" fill="#ec1aec" shape-rendering="crispEdges"/>
<rect x="325" y="183" width="1" height="1" fill="#ec1aec" shape-rendering="crispEdges"/>
<rect x="329" y="183" width="1" height="1" fill="#ec1aec" shape-rendering="crispEdges"/>
<rect x="333" y="184" width="1" height="1" fill="#ec1aec" shape-rendering="crispEdges"/>
<rect x="337" y="184" width="1" height="1" fill="#ec1aec" shape-rendering="crispEdges"/>
<rect x="341" y="185" width="1" height="1" fill="#ec1aec" shape-rendering="crispEdges"/>
<rect x="345" y="187" width="1" height="1" fill="#ec1aec" shape-rendering="crispEdges"/>
<rect x="349" y="189" width="1" height="1" fill="#ec1aec" shape-rendering="crispEdges"/>
<rect x="353" y="192" width="1" height="1" fill="#ec1aec" shape-rendering="crispEdges"/>
<rect x="357" y="196" width="1" height="1" fill="#ec1aec" shape-rendering="crispEdges"/>
<rect x="360" y="199" width="1" height="1" fill="#ec1aec" shape-rendering="crispEdges"/>
<rect x="364" y="203" width="1" height="1" fill="#ec1aec" shape-rendering="crispEdges"/>
<rect x="368" y="206" width="1" height="1" fill="#ec1aec" shape-rendering="crispEdges"/>
<rect x="372" y="209" width="1" height="1" fill="#ec1aec" shape-rendering="crispEdges"/>
<rect x="376" y="213" width="1" height="1" fill="#ec1aec" shape-rendering="crispEdges"/>
<rect x="380" y="218" width="1" height="1" fill="#ec1aec" shape-rendering="crispEdges"/>
<rect x="384" y="222" width="1" height="1" fill="#ec1aec" shape-rendering="crispEdges"/>
<rect x="388" y="226" width="1" height="1" fill="#ec1aec" shape-rendering="crispEdges"/>
<rect x="392" y="230" width="1" height="1" fill="#ec1aec" shape-rendering="crispEdges"/>
<rect x="396" y="232" width="1" height="1" fill="#ec1aec" shape-rendering="crispEdges"/>
<rect x="400" y="233" width="1" height="1" fill="#ec1aec" shape-rendering="crispEdges"/>
<rect x="404" y="234" width="1" height="1" fill="#ec1aec" shape-rendering="crispEdges"/>
<rect x="408" y="235" width="1" height="1" fill="#ec1aec" shape-rendering="crispEdges"/>
<rect x="412" y="236" width="1" height="1" fill="#ec1aec" shape-rendering="crispEdges"/>
<rect x="416" y="236" width="1" height="1" fill="#ec1aec" shape-rendering="crispEdges"/>
<rect x="420" y="236" width="1" height="1" fill="#ec1aec" shape-rendering="crispEdges"/>
<rect x="424" y="235" width="1" height="1" fill="#ec1aec" shape-rendering="crispEdges"/>
<rect x="427" y="234" width="1" height="1" fill="#ec1aec" shape-rendering="crispEdges"/>
<rect x="431" y="232" width="1" height="1" fill="#ec1aec" shape-rendering="crispEdges"/>
<rect x="435" y="231" width="1" height="1" fill="#ec1aec" shape-rendering="crispEdges"/>
<rect x="439" y="230" width="1" height="1" fill="#ec1aec" shape-rendering="crispEdges"/>
<rect x="443" y="228" width="1" height="1" fill="#ec1aec" shape-rendering="crispEdges"/>
<rect x="447" y="226" width="1" height="1" fill="#ec1aec" shape-rendering="crispEdges"/>
<rect x="451" y="222" width="1" height="1" fill="#ec1aec" shape-rendering="crispEdges"/>
<rect x="455" y="217" width="1" height="1" fill="#ec1aec" shape-rendering="crispEdges"/>
<rect x="459" y="212" width="1" height="1" fill="#ec1aec" shape-rendering="crispEdges"/>
<rect x="463" y="208" width="1" height="1" fill="#ec1aec" shape-rendering="crispEdges"/>
<rect x="467" y="198" width="1" height="1" fill="#ec1aec" shape-rendering="crispEdges"/>
<rect x="471" y="190" width="1" height="1" fill="#ec1aec" shape-rendering="crispEdges"/>
<rect x="475" y="186" width="1" height="1" fill="#ec1aec" shape-rendering="crispEdges"/>
<rect x="479" y="181" width="1" height="1" fill="#ec1aec" shape-rendering="crispEdges"/>
<rect x="483" y="178" width="1" height="1" fill="#ec1aec" shape-rendering="crispEdges"/>
<rect x="487" y="176" width="1" height="1" fill="#ec1aec" shape-rendering="crispEdges"/>
<rect x="490" y="173" width="1" height="1" fill="#ec1aec" shape-rendering="crispEdges"/>
<rect x="494" y="171" width="1" height="1" fill="#ec1aec" shape-rendering="crispEdges"/>
<rect x="498" y="170" width="1" height="1" fill="#ec1aec" shape-rendering="crispEdges"/>
<rect x="502" y="167" width="1" height="1" fill="#ec1aec" shape-rendering="crispEdges"/>
<rect x="506" y="164" width="1" height="1" fill="#ec1aec" shape-rendering="crispEdges"/>
<rect x="510" y="159" width="1" height="1" fill="#ec1aec" shape-rendering="crispEdges"/>
<rect x="514" y="155" width="1" height="1" fill="#ec1aec" shape-rendering="crispEdges"/>
<rect x="518" y="150" width="1" height="1" fill="#ec1aec" shape-rendering="crispEdges"/>
<rect x="522" y="144" width="1" height="1" fill="#ec1aec" shape-rendering="crispEdges"/>
<rect x="526" y="138" width="1" height="1" fill="#ec1aec" shape-rendering="crispEdges"/>
<rect x="530" y="136" width="1" height="1" fill="#ec1aec" shape-rendering="crispEdges"/>
<rect x="534" y="133" width="1" height="1" fill="#ec1aec" shape-rendering="crispEdges"/>
<rect x="538" y="133" width="1" height="1" fill="#ec1aec" shape-rendering="crispEdges"/>
<rect x="542" y="133" width="1" height="1" fill="#ec1aec" shape-rendering="crispEdges"/>
<rect x="546" y="134" width="1" height="1" fill="#ec1aec" shape-rendering="crispEdges"/>
<rect x="550" y="136" width="1" height="1" fill="#ec1aec" shape-rendering="crispEdges"/>
<rect x="554" y="138" width="1" height="1" fill="#ec1aec" shape-rendering="crispEdges"/>
<rect x="557" y="141" width="1" height="1" fill="#ec1aec" shape-rendering="crispEdges"/>
<rect x="561" y="142" width="1" height="1" fill="#ec1aec" shape-rendering="crispEdges"/>
<rect x="565" y="143" width="1" height="1" fill="#ec1aec" shape-rendering="crispEdges"/>
<rect x="569" y="144" width="1" height="1" fill="#ec1aec" shape-rendering="crispEdges"/>
<line x1="317.1" y1="160.3" x2="393.7" y2="234.5" stroke="#e61414" stroke-width="1.05"/>
<text x="30" y="24" font-size="14" fill="#f4f4f4" textLength="108" lengthAdjust="spacingAndGlyphs">Dialog Semicond</text>
<text x="11.2" y="421.6" font-size="16.5" fill="#e6ffd2" textLength="81" lengthAdjust="spacingAndGlyphs">12.07.2013</text>
<text x="311.8" y="421.6" font-size="16.5" fill="#e6ffd2" textLength="81" lengthAdjust="spacingAndGlyphs">28.10.2013</text>
<text x="402.5" y="421.6" font-size="16.5" fill="#e6ffd2" textLength="81" lengthAdjust="spacingAndGlyphs">28.11.2013</text>
<text x="547.3" y="421.6" font-size="16.5" fill="#e6ffd2" textLength="81" lengthAdjust="spacingAndGlyphs">27.01.2014</text>
<rect x="7" y="431" width="1.15" height="189" fill="#bdf2bd"/>
<rect x="307" y="431" width="1.15" height="189" fill="#bdf2bd"/>
<rect x="398" y="431" width="1.15" height="189" fill="#bdf2bd"/>
<rect x="543" y="431" width="1.15" height="189" fill="#bdf2bd"/>
<polygon points="0,431 0,584 4.1,575.8 7.2,570.7 11.3,566 15.4,562.5 18.4,568.6 23.6,571.7 27.3,565.2 31.4,568.6 33.8,558.4 38.9,540 43.4,532.4 47.5,537.5 55.3,528.3 58.8,535.2 62.5,527.3 66.6,530.1 70.7,527.7 74.8,522.3 78.9,518.6 82.6,512.4 86.5,515.5 90.6,512 98.6,500.3 102.5,505.9 110.5,516.7 114.4,513 118.5,509.6 122.1,500.5 125.2,506 129.3,509.1 133.4,513.8 137.5,505.6 141.4,500.5 145.5,506 149.4,499.4 153.5,507.6 157.3,503.9 160,500.5 163.1,494.3 169.2,480 173.3,469.7 177.4,490.2 181.5,479.3 185.4,484.1 189.5,492.3 192.6,497.4 196.5,493.3 200.4,488.6 204.5,493.3 208.4,485.1 212.5,482 216.6,477.3 220.5,482.6 224.4,479.3 228.5,486.7 232.4,482.6 236.5,485.1 240.4,488.2 244.4,486.1 248.3,487.5 252.4,486.7 256.5,489.2 260.6,484.1 263.5,478.3 267.4,481 271.5,478.3 275.3,482 279.4,487.1 283.5,483 287.4,480.6 291.3,488.2 295.4,492.7 299.5,478.9 302.6,477.9 304.6,481 307.5,488.2 309.8,499.4 312.8,506.6 316.9,513.8 323.5,522.6 330.5,512.7 334.4,516.8 338.5,523 342.6,530.2 346.7,526.1 350.3,530.2 354.4,540.4 358.1,533.2 362.2,529.5 366.3,533.2 370.4,535.3 373.9,533.2 377.6,538.4 382.3,546.6 386.4,541.8 390.5,546.6 394.4,538 398.1,529.1 401.5,521.4 405.2,526.1 408.9,517.9 413.4,524 417.5,515.2 425.3,502.5 429.4,507.6 437,516.8 442.1,511.1 447.2,502.5 450.3,494.3 453.4,483 456.5,474.2 460.6,478.3 464.7,466.6 467.7,472.2 471.8,469.7 476.1,473.5 480.2,470 484.3,482.3 488.4,493.2 492.5,482.9 496.6,489.5 500.3,484.4 504.8,460.8 512.4,442.3 516.5,449.1 524.3,436.6 528.4,444 532.5,436.6 536.5,445.4 542.7,461.8 546.8,478.2 550.9,488.5 555,494.6 563.2,508.3 567.3,499.7 571.4,505.5 576,500.1 576,431" fill="rgba(0,129,130,0.68)"/>
<polygon points="0.0,569.5 6.1,570.3 12.3,573.3 18.4,575.0 26.6,575.5 34.8,574.4 43.0,571.2 53.3,566.1 63.5,561.0 71.7,555.2 82.0,546.7 92.2,538.0 102.5,531.2 112.7,525.1 123.0,520.0 128.2,518.8 138.5,516.0 148.7,513.7 159.0,510.6 169.2,506.6 179.5,503.6 189.7,500.9 200.0,498.9 210.2,496.2 220.5,492.8 230.7,489.6 241.0,487.5 256.5,487.7 266.7,488.1 277.0,486.6 287.2,486.0 297.5,486.2 307.7,486.6 318.0,490.7 328.2,495.4 338.5,499.8 348.7,505.9 359.0,511.5 364.2,514.1 374.5,520.3 384.7,528.5 391.9,532.0 398.1,532.2 407.3,532.7 417.5,532.8 427.8,530.3 440.1,527.6 450.3,524.6 458.5,518.6 466.7,511.4 477.0,502.2 482.2,499.4 492.5,495.4 502.7,490.7 513.0,483.2 523.2,474.1 533.5,467.4 539.6,465.6 543.7,465.8 554.0,468.3 564.2,471.4 576.0,471.9 576.0,477.4 564.2,476.9 554.0,473.7 543.7,470.2 539.6,469.4 533.5,470.6 523.2,476.9 513.0,485.6 502.7,493.1 492.5,497.8 482.2,502.0 477.0,504.8 466.7,514.0 458.5,521.2 450.3,527.6 440.1,531.4 427.8,534.9 417.5,537.8 407.3,537.9 398.1,537.6 391.9,537.4 384.7,533.9 374.5,525.7 364.2,519.5 359.0,516.9 348.7,511.3 338.5,505.2 328.2,500.6 318.0,495.9 307.7,491.8 297.5,491.4 287.2,491.2 277.0,491.8 266.7,493.1 256.5,492.7 241.0,491.9 230.7,492.8 220.5,495.9 210.2,499.4 200.0,502.1 189.7,504.1 179.5,506.8 169.2,509.8 159.0,513.6 148.7,516.8 138.5,519.0 128.2,521.8 123.0,523.0 112.7,528.1 102.5,534.3 92.2,541.0 82.0,549.8 71.7,558.3 63.5,564.0 53.3,569.1 43.0,575.2 34.8,579.2 26.6,580.3 18.4,580.0 12.3,578.3 6.1,576.5 0.0,576.0" fill="rgba(255,255,255,0.5)"/>
<polyline points="3,566.6 8.2,568.6 16.4,571.3 22.5,572.7 28.7,572.7 40,570.7 51.2,565.2 61.5,559.8 71.7,553.7 82,546.1 91.2,538.5 100.4,531.8 110.7,525 120.9,519.9 131.3,515.2 143.6,511.7 154.9,508.6 167.2,505.6 178.5,500.9 189.7,498.4 201,495.7 212.3,492.9 224.6,489.2 235.8,486.7 246.2,485.5 256.5,486.1 270.8,485.1 283.1,484.1 295.4,484.1 307.7,484.7 318,488.2 329.2,492.7 340.5,496.4 350.8,502.5 358.1,507.6 371.4,514.2 381.7,521.4 390.9,528.1 403.2,529.8 414.5,530.6 426.7,529.1 438,526.5 449.3,523 459.5,516.2 468.8,506.6 477,500.5 487.4,494.6 498.6,490.1 508.9,484.4 519.1,476.2 528.4,469.6 538.6,464.3 548.8,464.5 561.1,466.9 576,470.5" fill="none" stroke="#12f012" stroke-width="2.5" stroke-dasharray="5.6 5.9"/>
<polyline points="0,584 4.1,575.8 7.2,570.7 11.3,566 15.4,562.5 18.4,568.6 23.6,571.7 27.3,565.2 31.4,568.6 33.8,558.4 38.9,540 43.4,532.4 47.5,537.5 55.3,528.3 58.8,535.2 62.5,527.3 66.6,530.1 70.7,527.7 74.8,522.3 78.9,518.6 82.6,512.4 86.5,515.5 90.6,512 98.6,500.3 102.5,505.9 110.5,516.7 114.4,513 118.5,509.6 122.1,500.5 125.2,506 129.3,509.1 133.4,513.8 137.5,505.6 141.4,500.5 145.5,506 149.4,499.4 153.5,507.6 157.3,503.9 160,500.5 163.1,494.3 169.2,480 173.3,469.7 177.4,490.2 181.5,479.3 185.4,484.1 189.5,492.3 192.6,497.4 196.5,493.3 200.4,488.6 204.5,493.3 208.4,485.1 212.5,482 216.6,477.3 220.5,482.6 224.4,479.3 228.5,486.7 232.4,482.6 236.5,485.1 240.4,488.2 244.4,486.1 248.3,487.5 252.4,486.7 256.5,489.2 260.6,484.1 263.5,478.3 267.4,481 271.5,478.3 275.3,482 279.4,487.1 283.5,483 287.4,480.6 291.3,488.2 295.4,492.7 299.5,478.9 302.6,477.9 304.6,481 307.5,488.2 309.8,499.4 312.8,506.6 316.9,513.8 323.5,522.6 330.5,512.7 334.4,516.8 338.5,523 342.6,530.2 346.7,526.1 350.3,530.2 354.4,540.4 358.1,533.2 362.2,529.5 366.3,533.2 370.4,535.3 373.9,533.2 377.6,538.4 382.3,546.6 386.4,541.8 390.5,546.6 394.4,538 398.1,529.1 401.5,521.4 405.2,526.1 408.9,517.9 413.4,524 417.5,515.2 425.3,502.5 429.4,507.6 437,516.8 442.1,511.1 447.2,502.5 450.3,494.3 453.4,483 456.5,474.2 460.6,478.3 464.7,466.6 467.7,472.2 471.8,469.7 476.1,473.5 480.2,470 484.3,482.3 488.4,493.2 492.5,482.9 496.6,489.5 500.3,484.4 504.8,460.8 512.4,442.3 516.5,449.1 524.3,436.6 528.4,444 532.5,436.6 536.5,445.4 542.7,461.8 546.8,478.2 550.9,488.5 555,494.6 563.2,508.3 567.3,499.7 571.4,505.5 576,500.1" fill="none" stroke="#e01010" stroke-width="1" stroke-linejoin="round"/>
<g shape-rendering="crispEdges" fill="#f2f2f2">
<rect x="119" y="514" width="1" height="38"/>
<rect x="84" y="556" width="1" height="28"/>
<rect x="194" y="549" width="11" height="1"/><rect x="204" y="549" width="1" height="58"/><rect x="194" y="606" width="11" height="1"/>
</g>
<text x="112" y="565.8" font-size="14" fill="#f2f2f2" textLength="84" lengthAdjust="spacingAndGlyphs">Ist Kaufdruck</text>
<text x="71.5" y="599.1" font-size="14" fill="#f2f2f2" textLength="92" lengthAdjust="spacingAndGlyphs">Soll Kaufdruck</text>
<text x="211.5" y="572.8" font-size="14" fill="#f2f2f2" textLength="93.5" lengthAdjust="spacingAndGlyphs">für steigenden</text>
<text x="211" y="591.6" font-size="14" fill="#f2f2f2" textLength="27" lengthAdjust="spacingAndGlyphs">Kurs</text>
<text x="327" y="565.6" font-size="14" fill="#e42222" textLength="56.5" lengthAdjust="spacingAndGlyphs">Ist &lt; Soll</text>
<text x="442.5" y="561.7" font-size="14" fill="#14c814" textLength="56.5" lengthAdjust="spacingAndGlyphs">Ist &gt; Soll</text>
<g shape-rendering="crispEdges">
<rect x="0" y="3" width="677" height="1" fill="#f00"/>
<rect x="676" y="3" width="1" height="427" fill="#f00"/>
<rect x="0" y="429" width="677" height="1" fill="#f00"/>
<rect x="0" y="430" width="677" height="1" fill="#a9b9b9"/>
<rect x="676" y="430" width="1" height="191" fill="#a8a8a8"/>
<rect x="0" y="620" width="677" height="1" fill="#a8a8a8"/>
<rect x="62" y="622" width="1" height="4" fill="#e8e8e8"/>
<rect x="149" y="622" width="1" height="4" fill="#e8e8e8"/>
<rect x="232" y="622" width="1" height="4" fill="#e8e8e8"/>
<rect x="323" y="622" width="1" height="4" fill="#e8e8e8"/>
<rect x="405" y="622" width="1" height="4" fill="#e8e8e8"/>
<rect x="476" y="622" width="1" height="4" fill="#e8e8e8"/>
<rect x="563" y="622" width="1" height="4" fill="#e8e8e8"/>
<rect x="642" y="622" width="1" height="4" fill="#e8e8e8"/>
<rect x="678" y="32" width="2" height="1" fill="#f0f0f0"/>
<rect x="678" y="42" width="2" height="1" fill="#f0f0f0"/>
<rect x="678" y="51" width="2" height="1" fill="#f0f0f0"/>
<rect x="678" y="60" width="2" height="1" fill="#f0f0f0"/>
<rect x="678" y="70" width="4" height="1" fill="#f0f0f0"/>
<rect x="678" y="79" width="2" height="1" fill="#f0f0f0"/>
<rect x="678" y="88" width="2" height="1" fill="#f0f0f0"/>
<rect x="678" y="97" width="2" height="1" fill="#f0f0f0"/>
<rect x="678" y="107" width="2" height="1" fill="#f0f0f0"/>
<rect x="678" y="116" width="4" height="1" fill="#f0f0f0"/>
<rect x="678" y="125" width="2" height="1" fill="#f0f0f0"/>
<rect x="678" y="135" width="2" height="1" fill="#f0f0f0"/>
<rect x="678" y="144" width="2" height="1" fill="#f0f0f0"/>
<rect x="678" y="153" width="2" height="1" fill="#f0f0f0"/>
<rect x="678" y="163" width="4" height="1" fill="#f0f0f0"/>
<rect x="678" y="172" width="2" height="1" fill="#f0f0f0"/>
<rect x="678" y="181" width="2" height="1" fill="#f0f0f0"/>
<rect x="678" y="190" width="2" height="1" fill="#f0f0f0"/>
<rect x="678" y="199" width="2" height="1" fill="#f0f0f0"/>
<rect x="678" y="209" width="4" height="1" fill="#f0f0f0"/>
<rect x="678" y="218" width="2" height="1" fill="#f0f0f0"/>
<rect x="678" y="227" width="2" height="1" fill="#f0f0f0"/>
<rect x="678" y="237" width="2" height="1" fill="#f0f0f0"/>
<rect x="678" y="246" width="2" height="1" fill="#f0f0f0"/>
<rect x="678" y="255" width="4" height="1" fill="#f0f0f0"/>
<rect x="678" y="264" width="2" height="1" fill="#f0f0f0"/>
<rect x="678" y="274" width="2" height="1" fill="#f0f0f0"/>
<rect x="678" y="283" width="2" height="1" fill="#f0f0f0"/>
<rect x="678" y="292" width="2" height="1" fill="#f0f0f0"/>
<rect x="678" y="302" width="4" height="1" fill="#f0f0f0"/>
<rect x="678" y="311" width="2" height="1" fill="#f0f0f0"/>
<rect x="678" y="320" width="2" height="1" fill="#f0f0f0"/>
<rect x="678" y="329" width="2" height="1" fill="#f0f0f0"/>
<rect x="678" y="339" width="2" height="1" fill="#f0f0f0"/>
<rect x="678" y="348" width="4" height="1" fill="#f0f0f0"/>
<rect x="678" y="357" width="2" height="1" fill="#f0f0f0"/>
<rect x="678" y="366" width="2" height="1" fill="#f0f0f0"/>
<rect x="678" y="376" width="2" height="1" fill="#f0f0f0"/>
<rect x="678" y="385" width="2" height="1" fill="#f0f0f0"/>
<rect x="678" y="394" width="4" height="1" fill="#f0f0f0"/>
<rect x="678" y="404" width="2" height="1" fill="#f0f0f0"/>
<rect x="678" y="413" width="2" height="1" fill="#f0f0f0"/>
<rect x="678" y="422" width="2" height="1" fill="#f0f0f0"/>
</g>
<text x="683.6" y="76.7" font-size="17" fill="#f6f6f6" textLength="51" lengthAdjust="spacingAndGlyphs">17,000</text>
<text x="683.6" y="123.2" font-size="17" fill="#f6f6f6" textLength="51" lengthAdjust="spacingAndGlyphs">16,000</text>
<text x="683.6" y="216.1" font-size="17" fill="#f6f6f6" textLength="51" lengthAdjust="spacingAndGlyphs">14,000</text>
<text x="683.6" y="262.5" font-size="17" fill="#f6f6f6" textLength="51" lengthAdjust="spacingAndGlyphs">13,000</text>
<text x="683.6" y="308.9" font-size="17" fill="#f6f6f6" textLength="51" lengthAdjust="spacingAndGlyphs">12,000</text>
<text x="683.6" y="355.4" font-size="17" fill="#f6f6f6" textLength="51" lengthAdjust="spacingAndGlyphs">11,000</text>
<text x="683.6" y="401.9" font-size="17" fill="#f6f6f6" textLength="51" lengthAdjust="spacingAndGlyphs">10,000</text>
<text x="679.5" y="22.6" font-size="16" fill="#f6f6f6">€</text>
<polygon points="678,164.8 684,154 738,154 738,176 684,176" fill="#fff"/>
<text x="690" y="171" font-size="17" fill="#000" textLength="51" lengthAdjust="spacingAndGlyphs">14,955</text>
<g shape-rendering="crispEdges"><rect x="652" y="6" width="11" height="11" fill="#7c7c7c"/><rect x="664" y="6" width="11" height="11" fill="#7c7c7c"/><rect x="654" y="8" width="7" height="7" fill="#111"/><rect x="655" y="10" width="5" height="4" fill="#808080"/></g><path d="M666.5 8.5 L672.5 14.5 M672.5 8.5 L666.5 14.5" stroke="#0c0c0c" stroke-width="1.3" fill="none"/>
<g shape-rendering="crispEdges"><rect x="652" y="433" width="11" height="11" fill="#7c7c7c"/><rect x="664" y="433" width="11" height="11" fill="#7c7c7c"/><rect x="654" y="435" width="7" height="7" fill="#111"/><rect x="655" y="437" width="5" height="4" fill="#808080"/></g><path d="M666.5 435.5 L672.5 441.5 M672.5 435.5 L666.5 441.5" stroke="#0c0c0c" stroke-width="1.3" fill="none"/>
<g><rect x="648" y="412" width="24" height="12" fill="#7e7e7e" shape-rendering="crispEdges"/>
<g shape-rendering="crispEdges" fill="#0a0a0a"><rect x="648" y="418" width="3" height="1"/><rect x="669" y="418" width="3" height="1"/><rect x="658" y="416" width="3" height="1"/><rect x="658" y="419" width="3" height="1"/></g>
<path d="M657.5 414.5 H654.5 Q651.5 414.5 651.5 418 Q651.5 421.5 654.5 421.5 H657.5 Z M662.5 414.5 H665.5 Q668.8 414.5 668.8 418 Q668.8 421.5 665.5 421.5 H662.5 Z" stroke="#0a0a0a" stroke-width="1.1" fill="none"/></g>
<text x="64" y="640.3" font-size="15.5" fill="#f4f4f4" textLength="28.8" lengthAdjust="spacingAndGlyphs">Aug</text>
<text x="150.8" y="640.3" font-size="15.5" fill="#f4f4f4" textLength="28" lengthAdjust="spacingAndGlyphs">Sep</text>
<text x="233.6" y="640.3" font-size="15.5" fill="#f4f4f4" textLength="26.2" lengthAdjust="spacingAndGlyphs">Okt</text>
<text x="324.8" y="640.3" font-size="15.5" fill="#f4f4f4" textLength="28.2" lengthAdjust="spacingAndGlyphs">Nov</text>
<text x="406.8" y="640.3" font-size="15.5" fill="#f4f4f4" textLength="29.4" lengthAdjust="spacingAndGlyphs">Dez</text>
<text x="477.6" y="640.3" font-size="15.5" fill="#f4f4f4" textLength="36.4" lengthAdjust="spacingAndGlyphs">2014</text>
<text x="564.6" y="640.3" font-size="15.5" fill="#f4f4f4" textLength="27.8" lengthAdjust="spacingAndGlyphs">Feb</text>
<text x="643.4" y="640.3" font-size="15.5" fill="#f4f4f4" textLength="27.4" lengthAdjust="spacingAndGlyphs">Mrz</text>
<rect x="679.5" y="622.5" width="12" height="12" fill="#686868" stroke="#8e8e8e" stroke-width="1"/>
<rect x="693.5" y="622.5" width="12" height="12" fill="#686868" stroke="#8e8e8e" stroke-width="1"/>
<rect x="707.5" y="622.5" width="12" height="12" fill="#686868" stroke="#8e8e8e" stroke-width="1"/>
<path d="M680 628.5 H691.5" stroke="#0a0a0a" stroke-width="1" fill="none" shape-rendering="crispEdges"/>
<path d="M684.3 628.5 l2.7 -2.7 M684.3 628.5 l2.7 2.7 M691.3 628.5 l-2.7 -2.7 M691.3 628.5 l-2.7 2.7" stroke="#0a0a0a" stroke-width="1.5" fill="none"/>
<path d="M695 628.5 H705" stroke="#0a0a0a" stroke-width="1" fill="none" shape-rendering="crispEdges"/>
<path d="M694.8 628.5 l2.8 -2.8 M694.8 628.5 l2.8 2.8 M705 628.5 l-2.8 -2.8 M705 628.5 l-2.8 2.8" stroke="#0a0a0a" stroke-width="1.5" fill="none"/>
<defs><linearGradient id="g3" x1="0" y1="0" x2="0" y2="1"><stop offset="0" stop-color="#6c6c6c"/><stop offset="1" stop-color="#2a2a2a"/></linearGradient></defs>
<path d="M708 628.5 L711 625.5 L713.5 628 L716.5 625 L719 628.5 V634 H708 Z" fill="url(#g3)"/>
<path d="M708 628.5 L711 625.5 L713.5 628 L716.5 625 L719 628.5" stroke="#0a0a0a" stroke-width="1" fill="none"/>
</svg></body></html>
